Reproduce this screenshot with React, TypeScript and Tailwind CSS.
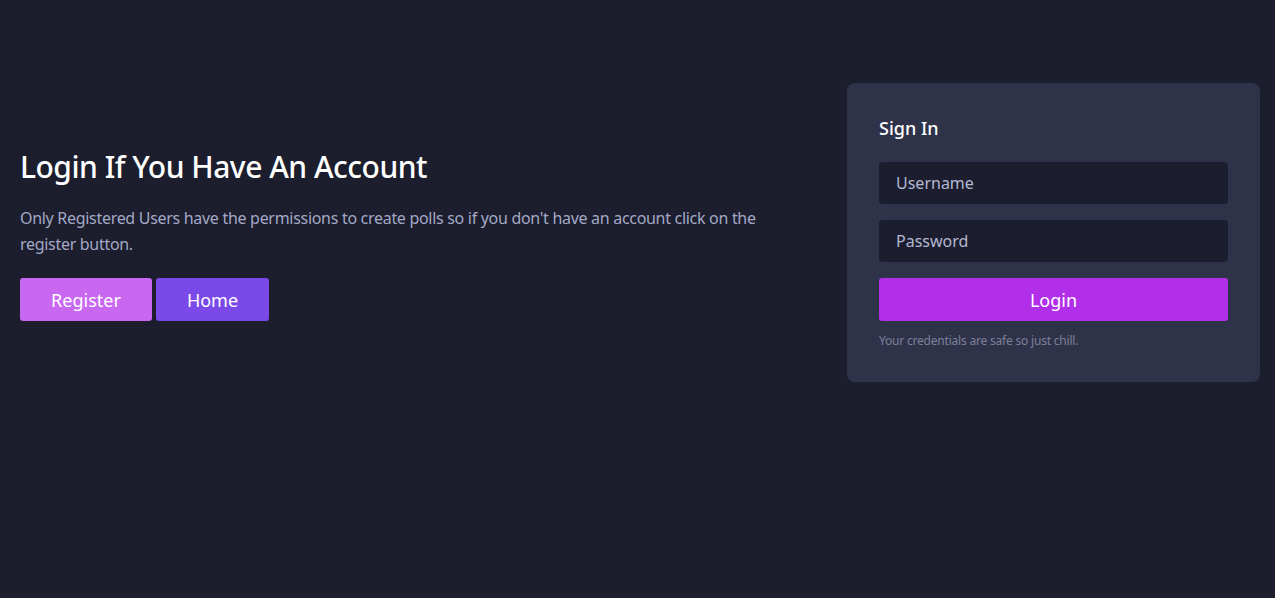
export default function App() {
  return (
    <div
      className="min-h-screen w-full bg-[#1c1d2d] text-white"
      style={{ fontFamily: '"Noto Sans", "Open Sans", sans-serif' }}
    >
      <div className="flex items-start pt-[83px] pl-5 pr-[15px]">
        <div className="flex-1 pr-4 pt-[66px]">
          <h1 className="text-[30px] font-medium leading-9 tracking-[-0.5px] text-white">
            Login If You Have An Account
          </h1>
          <p className="mt-5 max-w-[775px] text-base leading-[26px] tracking-[-0.3px] text-[#a3a9c6]">
            Only Registered Users have the permissions to create polls so if you don't have an account click on the
            register button.
          </p>
          <div className="mt-[21px] flex gap-1">
            <button className="h-[43px] w-[132px] rounded-[3px] bg-[#c867f0] text-lg text-white">Register</button>
            <button className="h-[43px] w-[113px] rounded-[3px] bg-[#7b49e8] text-lg text-white">Home</button>
          </div>
        </div>
        <div className="w-[413px] rounded-lg bg-[#2f3349] px-8 pt-[33px] pb-[33px]">
          <h2 className="text-lg font-medium leading-6 text-white">Sign In</h2>
          <div className="mt-[22px] flex flex-col gap-4">
            <input
              placeholder="Username"
              className="h-[42px] w-full rounded bg-[#1c1d2e] px-[17px] text-base text-white placeholder:text-[#b4b9d2] outline-none"
            />
            <input
              type="password"
              placeholder="Password"
              className="h-[42px] w-full rounded bg-[#1c1d2e] px-[17px] text-base text-white placeholder:text-[#b4b9d2] outline-none"
            />
            <button className="h-[43px] w-full rounded-[3px] bg-[#b22fea] text-lg text-white">Login</button>
          </div>
          <p className="mt-[12px] text-xs tracking-[-0.2px] text-[#7c8099]">Your credentials are safe so just chill.</p>
        </div>
      </div>
    </div>
  );
}
